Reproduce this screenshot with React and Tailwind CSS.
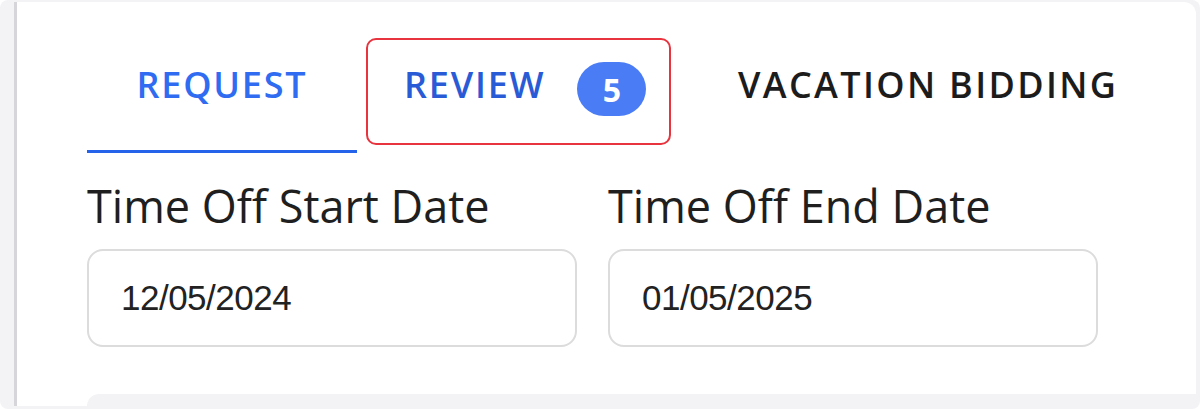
export default function App() {
  return (
    <div className="h-[409px] w-[1200px] overflow-hidden rounded-lg bg-[#f3f3f6] pt-[2px] pr-[4px] pb-[3px] pl-[14px] font-['Open_Sans',sans-serif]">
      <div className="flex h-full flex-col border-l-[3px] border-[#d6d6da] bg-white rounded-r-xl pl-[70px]">
        {/* tabs */}
        <div className="mt-[36px] flex items-start">
          <div className="flex h-[115px] w-[270px] justify-center border-b-[3px] border-[#2563eb] pt-[22px] text-[36px] leading-[49px] font-semibold tracking-[0.05em] text-[#2f6cf2]">
            REQUEST
          </div>
          <div className="ml-[9px] flex h-[107px] w-[305px] items-start rounded-[10px] border-2 border-[#e8343f] pt-[20px] pl-[36px] text-[36px] leading-[49px] font-semibold tracking-[0.05em] text-[#2a5bd7]">
            <span>REVIEW</span>
            <span className="mt-[2px] ml-[32px] flex h-[54px] w-[69px] items-center justify-center rounded-full bg-[#4a7cf5] text-[32px] font-bold tracking-normal text-white">
              5
            </span>
          </div>
          <div className="ml-[67px] pt-[22px] text-[36px] leading-[49px] font-semibold tracking-[0.065em] text-[#1c1c1c]">
            VACATION BIDDING
          </div>
        </div>

        {/* date fields */}
        <div className="mt-[27px] flex gap-[31px]">
          <div className="flex w-[490px] flex-col">
            <label className="text-[45px] leading-[52px] text-[#1f1f1f]">Time Off Start Date</label>
            <div className="mt-[17px] flex h-[98px] items-center rounded-[16px] border-2 border-[#dcdcdc] pl-[32px] font-['Liberation_Sans',sans-serif] text-[35px] tracking-[-0.5px] text-[#222]">
              12/05/2024
            </div>
          </div>
          <div className="flex w-[490px] flex-col">
            <label className="text-[45px] leading-[52px] text-[#1f1f1f]">Time Off End Date</label>
            <div className="mt-[17px] flex h-[98px] items-center rounded-[16px] border-2 border-[#dcdcdc] pl-[32px] font-['Liberation_Sans',sans-serif] text-[35px] tracking-[-0.5px] text-[#222]">
              01/05/2025
            </div>
          </div>
        </div>

        <div className="mt-[47px] flex-1 rounded-tl-[16px] bg-[#f3f3f5]" />
      </div>
    </div>
  )
}
